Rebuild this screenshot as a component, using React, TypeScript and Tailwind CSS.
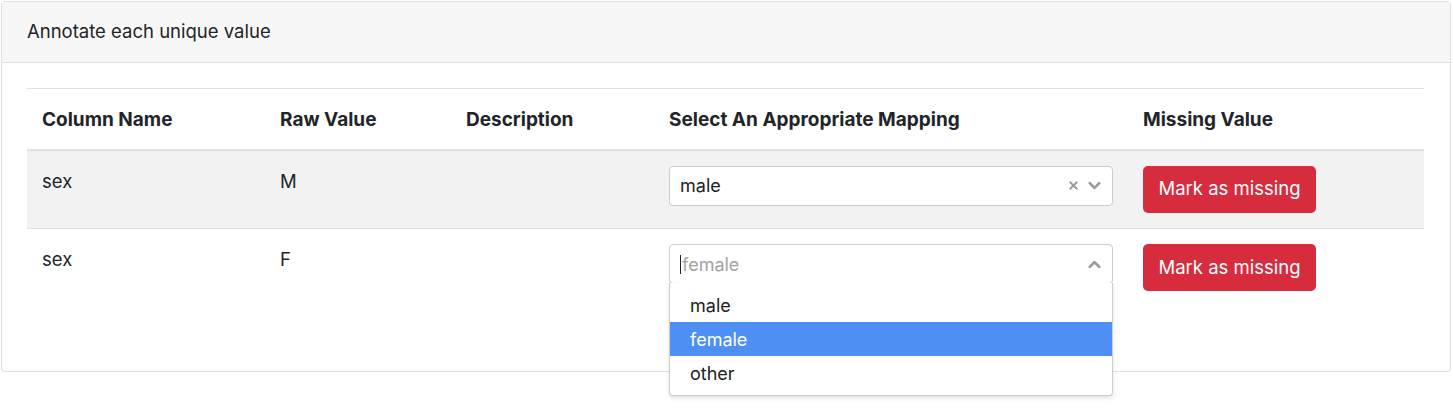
import { ChevronDown, ChevronUp, X } from "lucide-react";

const ROWS = [
  { column: "sex", raw: "M", value: "male", open: false },
  { column: "sex", raw: "F", value: "", open: true },
];

const OPTIONS = ["male", "female", "other"];

function MappingSelect({ value, open }: { value: string; open: boolean }) {
  return (
    <div className="relative w-full">
      <div className="flex h-[40px] items-center rounded-[4px] border border-[#cccccc] bg-white pl-[10px] pr-[8px]">
        {value ? (
          <span className="flex-1 text-[18px] text-[#222]">{value}</span>
        ) : (
          <span className="flex flex-1 items-center text-[18px] text-[#a3a3a3]">
            <span className="mr-px h-[19px] w-px bg-[#222]" />
            female
          </span>
        )}
        {value && <X size={13} strokeWidth={3.5} className="mr-[5px] text-[#9a9a9a]" />}
        {open ? (
          <ChevronUp size={19} strokeWidth={3.5} className="text-[#9a9a9a]" />
        ) : (
          <ChevronDown size={19} strokeWidth={3.5} className="text-[#9a9a9a]" />
        )}
      </div>
      {open && (
        <div className="absolute left-0 right-0 top-[39px] z-10 rounded-b-[4px] border border-t-0 border-[#cccccc] bg-white pb-[5px] pt-[5px] shadow-[0_2px_4px_rgba(0,0,0,0.12)]">
          {OPTIONS.map((o) => (
            <div
              key={o}
              className={`flex h-[34px] items-center px-[20px] text-[18px] ${
                o === "female" ? "bg-[#4e8ff3] text-white" : "text-[#222]"
              }`}
            >
              {o}
            </div>
          ))}
        </div>
      )}
    </div>
  );
}

export default function App() {
  return (
    <div className="min-h-[414px] bg-white pl-px pt-px font-['Inter','Liberation_Sans',sans-serif] text-[#212529]">
      <div className="w-[1450px] rounded-[4px] border border-[#dfdfdf]">
        <div className="flex h-[61px] items-center border-b border-[#dfdfdf] bg-[#f7f7f7] px-[25px] text-[18.5px]">
          Annotate each unique value
        </div>
        <div className="px-[25px] pb-[63px] pt-[25px]">
          <table className="w-[1397px] table-fixed border-collapse text-[18.5px]">
            <colgroup>
              <col className="w-[238px]" />
              <col className="w-[186px]" />
              <col className="w-[203px]" />
              <col className="w-[474px]" />
              <col className="w-[296px]" />
            </colgroup>
            <thead>
              <tr className="border-t border-b-2 border-[#dee2e6]">
                {["Column Name", "Raw Value", "Description", "Select An Appropriate Mapping", "Missing Value"].map(
                  (h) => (
                    <th key={h} className="h-[61px] px-[15px] pt-[2px] text-left align-middle text-[19px] font-bold">
                      {h}
                    </th>
                  )
                )}
              </tr>
            </thead>
            <tbody>
              {ROWS.map((r, i) => (
                <tr
                  key={r.raw}
                  className={i === 0 ? "border-b border-[#dee2e6] bg-[#f2f2f2]" : ""}
                >
                  <td className="h-[79px] px-[15px] pt-[15px] align-top leading-[30px]">{r.column}</td>
                  <td className="px-[15px] pt-[15px] align-top leading-[30px]">{r.raw}</td>
                  <td className="px-[15px] pt-[15px] align-top" />
                  <td className="px-[15px] pt-[15px] align-top">
                    <MappingSelect value={r.value} open={r.open} />
                  </td>
                  <td className="px-[15px] pt-[15px] align-top">
                    <button
                      type="button"
                      className="h-[47px] w-[173px] rounded-[5px] bg-[#d62c3e] text-[18.5px] text-white"
                    >
                      Mark as missing
                    </button>
                  </td>
                </tr>
              ))}
            </tbody>
          </table>
        </div>
      </div>
    </div>
  );
}
